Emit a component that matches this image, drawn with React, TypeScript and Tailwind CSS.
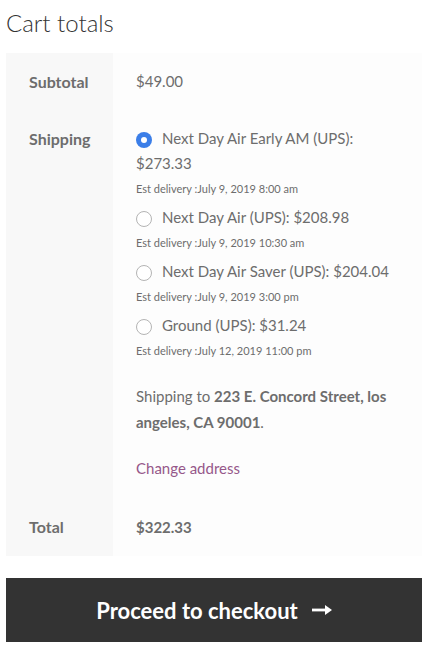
const options = [
  { label: 'Next Day Air Early AM (UPS):', price: '$273.33', eta: 'July 9, 2019 8:00 am', checked: true },
  { label: 'Next Day Air (UPS):', price: '$208.98', eta: 'July 9, 2019 10:30 am' },
  { label: 'Next Day Air Saver (UPS):', price: '$204.04', eta: 'July 9, 2019 3:00 pm' },
  { label: 'Ground (UPS):', price: '$31.24', eta: 'July 12, 2019 11:00 pm' },
];

function Radio({ checked }: { checked?: boolean }) {
  if (checked) {
    return (
      <span className="mr-[10px] inline-flex h-[16px] w-[16px] items-center justify-center rounded-full bg-[#3b7ee8] align-middle">
        <span className="h-[6px] w-[6px] rounded-full bg-white" />
      </span>
    );
  }
  return <span className="mr-[10px] inline-block h-[16px] w-[16px] rounded-full border border-[#b4b4b4] bg-white align-middle" />;
}

export default function App() {
  return (
    <div className="min-h-[649px] bg-white px-[6px] text-[15px] text-[#6d6d6d]" style={{ fontFamily: 'Lato, "Noto Sans", sans-serif' }}>
      <h2 className="pt-[6px] text-[24px] font-light leading-[34px] text-[#333333]">Cart totals</h2>
      <table className="mt-[13px] w-full border-collapse">
        <tbody>
          <tr>
            <th className="w-[107px] bg-[#f8f8f8] py-4 pl-[23px] text-left align-top text-[16px] font-bold leading-[25px]">Subtotal</th>
            <td className="bg-[#fdfdfd] py-4 pl-[23px] align-top leading-[25px]">$49.00</td>
          </tr>
          <tr>
            <th className="bg-[#f8f8f8] py-4 pl-[23px] text-left align-top text-[16px] font-bold leading-[25px]">Shipping</th>
            <td className="bg-[#fdfdfd] pt-4 pb-[19px] pl-[23px] pr-4 align-top">
              <ul className="mb-[20px]">
                {options.map((o) => (
                  <li key={o.label} className="mb-[4px]">
                    <div className="leading-[25px]">
                      <Radio checked={o.checked} />
                      {o.label} {o.price}
                    </div>
                    <div className="text-[11px] leading-[25px]">Est delivery :{o.eta}</div>
                  </li>
                ))}
              </ul>
              <p className="leading-[26px]">
                Shipping to <strong className="font-bold">223 E. Concord Street, los angeles, CA 90001</strong>.
              </p>
              <p className="mt-[21px] leading-[25px]">
                <a className="text-[#96588a]" href="#">Change address</a>
              </p>
            </td>
          </tr>
          <tr>
            <th className="bg-[#f8f8f8] pt-[15px] pb-[17px] pl-[23px] text-left align-top text-[16px] font-bold leading-[24px]">Total</th>
            <td className="bg-[#fdfdfd] pt-[15px] pb-[17px] pl-[23px] align-top font-bold leading-[24px]">$322.33</td>
          </tr>
        </tbody>
      </table>
      <button className="mt-[22px] flex h-[64px] w-full items-center justify-center gap-[14px] bg-[#333333] text-[22px] font-bold text-white">
        Proceed to checkout
        <svg width="20" height="10" viewBox="0 0 20 10" fill="white">
          <rect x="0" y="3.6" width="15" height="2.8" />
          <path d="M13 0 L20 5 L13 10 Z" />
        </svg>
      </button>
    </div>
  );
}
